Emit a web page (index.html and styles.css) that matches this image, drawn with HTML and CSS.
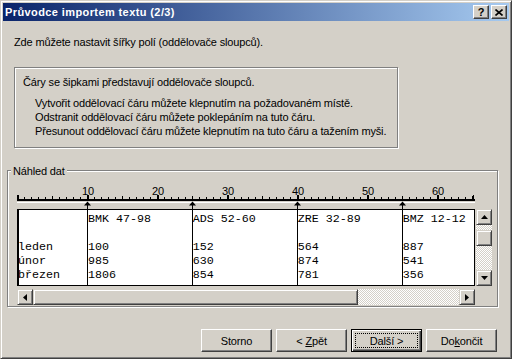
FILE: index.html
```html
<!DOCTYPE html>
<html lang="cs">
<head>
    <meta charset="UTF-8">
    <title>Průvodce importem textu (2/3)</title>
    <link rel="stylesheet" href="styles.css">
</head>
<body>
    <div class="window">
        <div class="titlebar">
            <span class="title">Průvodce importem textu (2/3)</span>
            <span class="title-btn help">?</span>
            <span class="title-btn">
                <svg width="8" height="7" viewBox="0 0 8 7"><path d="M0.5 0.5 L7.5 6.5 M7.5 0.5 L0.5 6.5" stroke="#000" stroke-width="1.6" fill="none"/></svg>
            </span>
        </div>

        <p class="intro">Zde můžete nastavit šířky polí (oddělovače sloupců).</p>

        <div class="info">
            <p class="info-head">Čáry se šipkami představují oddělovače sloupců.</p>
            <p class="info-line first">Vytvořit oddělovací čáru můžete klepnutím na požadovaném místě.</p>
            <p class="info-line">Odstranit oddělovací čáru můžete poklepáním na tuto čáru.</p>
            <p class="info-line">Přesunout oddělovací čáru můžete klepnutím na tuto čáru a tažením myši.</p>
        </div>

        <div class="group">
            <span class="group-title">Náhled dat</span>
            <div class="preview">
                <!-- ruler: one character = 7px -->
                <svg class="ruler" width="458" height="24" viewBox="0 0 458 24">
                    <defs>
                        <pattern id="tick1" width="7" height="24" patternUnits="userSpaceOnUse"><rect x="0" y="12" width="1" height="2"/></pattern>
                        <pattern id="tick5" width="35" height="24" patternUnits="userSpaceOnUse"><rect x="0" y="11" width="1" height="3"/></pattern>
                        <pattern id="tick10" width="70" height="24" patternUnits="userSpaceOnUse"><rect x="0" y="10" width="2" height="4"/></pattern>
                    </defs>
                    <rect x="0" y="0" width="458" height="24" fill="url(#tick1)"/>
                    <rect x="0" y="0" width="458" height="24" fill="url(#tick5)"/>
                    <rect x="0" y="0" width="458" height="24" fill="url(#tick10)"/>
                    <rect x="456" y="10" width="1" height="4"/>
                    <rect x="0" y="14" width="458" height="2"/>
                    <rect x="0" y="17" width="458" height="1" fill="#fff"/>
                    <g class="ruler-num">
                        <text x="71" y="10">10</text>
                        <text x="141" y="10">20</text>
                        <text x="211" y="10">30</text>
                        <text x="281" y="10">40</text>
                        <text x="351" y="10">50</text>
                        <text x="421" y="10">60</text>
                    </g>
                    <g class="breaks">
                        <polygon points="70.5,16.5 67,20.5 74,20.5"/><rect x="70" y="20" width="1" height="4"/>
                        <polygon points="175.5,16.5 172,20.5 179,20.5"/><rect x="175" y="20" width="1" height="4"/>
                        <polygon points="280.5,16.5 277,20.5 284,20.5"/><rect x="280" y="20" width="1" height="4"/>
                        <polygon points="385.5,16.5 382,20.5 389,20.5"/><rect x="385" y="20" width="1" height="4"/>
                    </g>
                </svg>

                <div class="view">
                    <div class="data">
<pre class="rows">          BMK 47-98      ADS 52-60      ZRE 32-89      BMZ 12-12

leden     100            152            564            887
únor      985            630            874            541
březen    1806           854            781            356</pre>
                    </div>
                    <div class="vscroll">
                        <span class="sbtn"><svg width="7" height="4" viewBox="0 0 7 4"><polygon points="3.5,0 7,4 0,4"/></svg></span>
                        <span class="vthumb"></span>
                        <span class="sbtn end"><svg width="7" height="4" viewBox="0 0 7 4"><polygon points="0,0 7,0 3.5,4"/></svg></span>
                    </div>
                </div>

                <div class="hscroll">
                    <span class="sbtn"><svg width="4" height="7" viewBox="0 0 4 7"><polygon points="0,3.5 4,0 4,7"/></svg></span>
                    <span class="hthumb"></span>
                    <span class="sbtn end"><svg width="4" height="7" viewBox="0 0 4 7"><polygon points="0,0 4,3.5 0,7"/></svg></span>
                </div>
            </div>
        </div>

        <div class="actions">
            <button class="btn"><span>Storno</span></button>
            <button class="btn"><span>&lt; <u>Z</u>pět</span></button>
            <button class="btn default"><span class="focus">Další &gt;</span></button>
            <button class="btn"><span>Do<u>k</u>ončit</span></button>
        </div>
    </div>
</body>
</html>
```

FILE: styles.css
```css
body {
    margin: 0;
    font-family: "Liberation Sans", Arial, sans-serif;
    font-size: 11px;
    letter-spacing: -0.15px;
    color: #000;
    background-color: #d4d0c8;
}
.window {
    box-sizing: border-box;
    width: 512px;
    height: 359px;
    padding: 2px;
    border: 1px solid;
    border-color: #d4d0c8 #404040 #404040 #d4d0c8;
    box-shadow: inset 1px 1px #fff, inset -1px -1px #808080;
    background-color: #d4d0c8;
}
.titlebar {
    display: flex;
    align-items: center;
    height: 18px;
    padding: 0 2px;
    background: linear-gradient(to right, #0a246a, #a6caf0);
    color: #fff;
    font-weight: bold;
}
.title {
    flex: 1;
    line-height: 14px;
    letter-spacing: 0.4px;
}
.title-btn {
    box-sizing: border-box;
    display: flex;
    align-items: center;
    justify-content: center;
    width: 16px;
    height: 14px;
    margin-left: 2px;
    color: #000;
    background-color: #d4d0c8;
    border: 1px solid;
    border-color: #fff #404040 #404040 #fff;
    box-shadow: inset -1px -1px #808080, inset 1px 1px #d4d0c8;
}
.title-btn.help {
    font-size: 11px;
    line-height: 12px;
}
.intro {
    margin: 14px 0 0 11px;
    line-height: 14px;
}
.info {
    box-sizing: border-box;
    width: 384px;
    height: 81px;
    margin: 18px 0 0 11px;
    padding: 7px 0 0 8px;
    border: 1px solid #808080;
    box-shadow: inset 1px 1px #fff, 1px 1px #fff;
}
.info p {
    margin: 0;
    line-height: 14px;
}
.info .info-line {
    padding-left: 12px;
}
.info .first {
    margin-top: 7px;
}
.group {
    box-sizing: border-box;
    width: 491px;
    height: 137px;
    margin: 22px 0 0 4px;
    border: 1px solid #808080;
    box-shadow: inset 1px 1px #fff, 1px 1px #fff;
}
.group-title {
    display: table;
    margin: -7px 0 0 3px;
    padding: 0 2px;
    line-height: 14px;
    background-color: #d4d0c8;
}
.preview {
    margin-left: 9px;
}
.ruler {
    display: block;
    margin-top: 7px;
}
.ruler-num text {
    font-family: "Liberation Sans", Arial, sans-serif;
    font-size: 11px;
    letter-spacing: 0;
    text-anchor: middle;
}
.view {
    display: flex;
}
.data {
    box-sizing: border-box;
    width: 458px;
    height: 77px;
    border: 1px solid #000;
    border-left-width: 2px;
    background:
        linear-gradient(#000, #000) 68px 0 / 1px 100% no-repeat,
        linear-gradient(#000, #000) 173px 0 / 1px 100% no-repeat,
        linear-gradient(#000, #000) 278px 0 / 1px 100% no-repeat,
        linear-gradient(#000, #000) 383px 0 / 1px 100% no-repeat,
        #fff;
    overflow: hidden;
}
.rows {
    margin: 0 0 0 -1px;
    padding-top: 2px;
    font-family: "Liberation Mono", "Courier New", monospace;
    font-size: 11.67px;
    line-height: 14px;
    letter-spacing: 0;
}
.vscroll,
.hscroll {
    display: flex;
    background: repeating-conic-gradient(#fff 0 25%, #d4d0c8 0 50%) 0 0 / 2px 2px;
}
.vscroll {
    flex-direction: column;
    width: 16px;
    height: 77px;
    margin-left: 1px;
}
.hscroll {
    width: 458px;
    height: 16px;
    margin-top: 3px;
}
.sbtn,
.vthumb,
.hthumb {
    box-sizing: border-box;
    background-color: #d4d0c8;
    border: 1px solid;
    border-color: #d4d0c8 #404040 #404040 #d4d0c8;
    box-shadow: inset 1px 1px #fff, inset -1px -1px #808080;
}
.sbtn {
    display: flex;
    align-items: center;
    justify-content: center;
    width: 16px;
    height: 16px;
}
.vscroll .end {
    margin-top: auto;
}
.hscroll .end {
    margin-left: auto;
}
.vthumb {
    height: 16px;
    margin-top: 5px;
}
.hthumb {
    width: 325px;
}
.actions {
    display: flex;
    justify-content: flex-end;
    gap: 4px;
    margin-top: 22px;
    padding-right: 12px;
}
.btn {
    box-sizing: border-box;
    display: flex;
    align-items: center;
    justify-content: center;
    width: 71px;
    height: 23px;
    padding: 0;
    font-family: inherit;
    font-size: 11px;
    letter-spacing: -0.15px;
    color: #000;
    background-color: #d4d0c8;
    border: 1px solid;
    border-color: #fff #404040 #404040 #fff;
    box-shadow: inset -1px -1px #808080, inset 1px 1px #d4d0c8;
}
.btn.default {
    border-color: #000;
    box-shadow: inset 1px 1px #fff, inset -1px -1px #404040, inset -2px -2px #808080;
}
.focus {
    box-sizing: border-box;
    display: flex;
    align-items: center;
    justify-content: center;
    width: 63px;
    height: 15px;
    border: 1px dotted #000;
}
```
